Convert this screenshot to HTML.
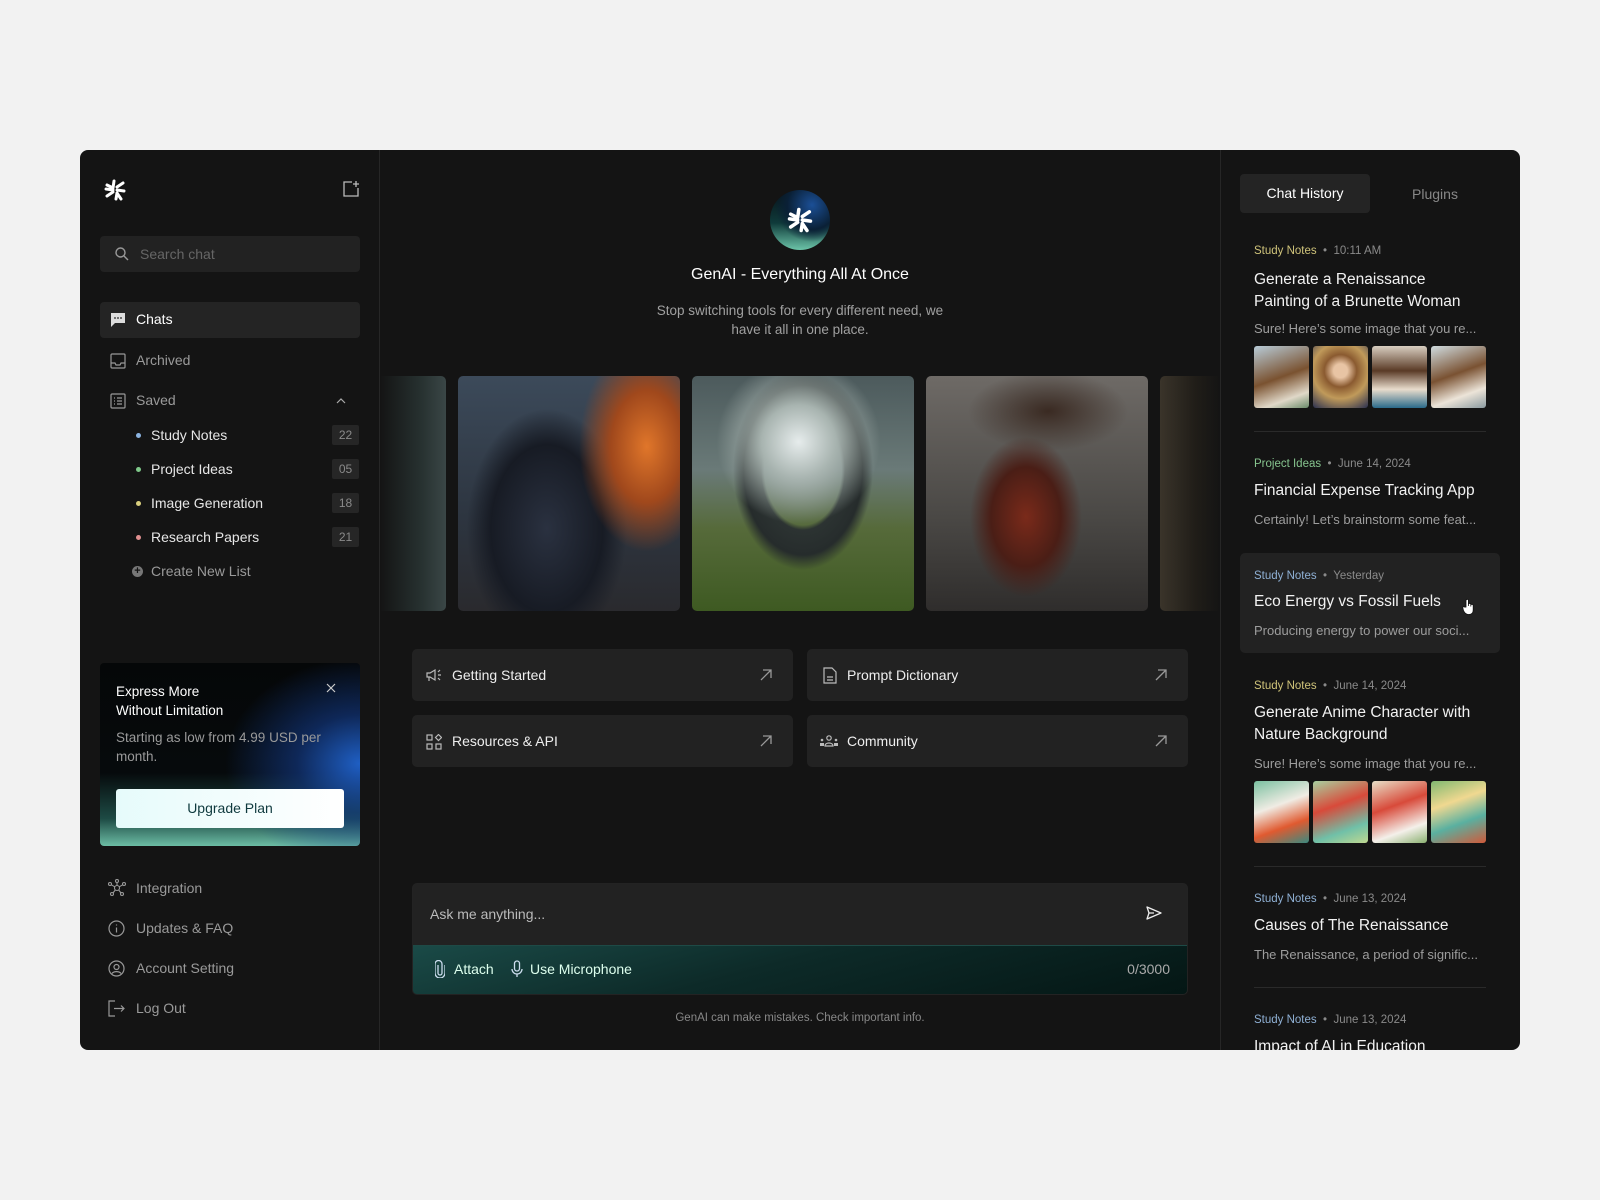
<!DOCTYPE html>
<html><head><meta charset="utf-8"><style>
*{box-sizing:border-box;margin:0;padding:0}
body{width:1600px;height:1200px;background:#f2f2f2;font-family:"Liberation Sans",sans-serif;overflow:hidden;position:relative}
.panel{position:absolute;left:80px;top:150px;width:1440px;height:900px;background:#141414;border-radius:8px;overflow:hidden}
.abs{position:absolute}
.side{left:0;top:0;width:300px;height:900px;border-right:1px solid #262626}
.right{left:1140px;top:0;width:300px;height:900px;border-left:1px solid #262626}
.t{position:absolute;white-space:nowrap}
svg{position:absolute}
.nav{color:#9a9a9a;font-size:14px}
.sub{color:#e6e6e6;font-size:14px}
.dot{position:absolute;width:5px;height:5px;border-radius:50%}
.badge{position:absolute;left:252px;width:27px;height:20px;background:#262626;color:#8a8a8a;font-size:12px;text-align:center;line-height:20px;border-radius:2px}
.card{position:absolute;background:#222;border-radius:5px;height:52px;width:381px}
.card .t{color:#eee;font-size:14px;top:18px;left:40px}
.img{position:absolute;top:226px;height:235px;border-radius:5px;overflow:hidden}
.meta{font-size:11.5px;color:#8a8a8a}
.ttl{color:#f2f2f2;font-size:15.5px;line-height:22px;white-space:normal;width:240px}
.pv{color:#9d9d9d;font-size:13px}
.th{position:absolute;width:55px;height:62px;border-radius:3px}
.hr{position:absolute;left:1174px;width:232px;height:1px;background:#2a2a2a}
</style></head><body>
<div class="panel">
 <div class="abs side">
  <svg style="left:23px;top:28px" width="24" height="24" viewBox="0 0 24 24" fill="none" stroke="#fff" stroke-width="3" stroke-linecap="round" stroke-linejoin="round">
   <path d="M4 7l6 3M11 3l-1 7M20 5l-6 4M21 13l-7-1M18 21l-4-6M13 21l1-6M4 18l6-4M3 11l7 1"/></svg>
  <svg style="left:262px;top:30px" width="18" height="18" viewBox="0 0 18 18" fill="none" stroke="#bbb" stroke-width="1.3"><path d="M10 2H2v14h14V8"/><path d="M14 1v6M11 4h6"/></svg>
  <div class="abs" style="left:20px;top:86px;width:260px;height:36px;background:#222;border-radius:4px"></div>
  <svg style="left:34px;top:96px" width="16" height="16" viewBox="0 0 16 16" fill="none" stroke="#999" stroke-width="1.4"><circle cx="6.5" cy="6.5" r="4.5"/><path d="M10 10l4 4"/></svg>
  <div class="t" style="left:60px;top:96px;color:#666;font-size:14px">Search chat</div>
  <div class="abs" style="left:20px;top:152px;width:260px;height:36px;background:#242424;border-radius:4px"></div>
  <svg style="left:30px;top:162px" width="16" height="16" viewBox="0 0 16 16"><path d="M1 1h14v10H5l-4 4z" fill="#ddd"/><circle cx="5" cy="6" r=".9" fill="#242424"/><circle cx="8" cy="6" r=".9" fill="#242424"/><circle cx="11" cy="6" r=".9" fill="#242424"/></svg>
  <div class="t" style="left:56px;top:161px;color:#fff;font-size:14px">Chats</div>
  <svg style="left:30px;top:203px" width="16" height="16" viewBox="0 0 16 16" fill="none" stroke="#999" stroke-width="1.2"><rect x="1" y="1" width="14" height="14" rx="1"/><path d="M1 10h4l1 2h4l1-2h4"/></svg>
  <div class="t nav" style="left:56px;top:202px">Archived</div>
  <svg style="left:30px;top:243px" width="16" height="16" viewBox="0 0 16 16" fill="none" stroke="#999" stroke-width="1.2"><rect x="1" y="1" width="14" height="14" rx="1"/><path d="M4 5h1M7 5h5M4 8h1M7 8h5M4 11h1M7 11h5"/></svg>
  <div class="t nav" style="left:56px;top:242px">Saved</div>
  <svg style="left:256px;top:247px" width="10" height="8" viewBox="0 0 10 8" fill="none" stroke="#aaa" stroke-width="1.2"><path d="M1 6l4-4 4 4"/></svg>
  <div class="dot" style="left:56px;top:283px;background:#8bb3e0"></div><div class="t sub" style="left:71px;top:277px">Study Notes</div><div class="badge" style="top:275px">22</div>
  <div class="dot" style="left:56px;top:317px;background:#7fc98a"></div><div class="t sub" style="left:71px;top:311px">Project Ideas</div><div class="badge" style="top:309px">05</div>
  <div class="dot" style="left:56px;top:351px;background:#d9cf7e"></div><div class="t sub" style="left:71px;top:345px">Image Generation</div><div class="badge" style="top:343px">18</div>
  <div class="dot" style="left:56px;top:385px;background:#e09090"></div><div class="t sub" style="left:71px;top:379px">Research Papers</div><div class="badge" style="top:377px">21</div>
  <div class="abs" style="left:52px;top:416px;width:11px;height:11px;border-radius:50%;background:#777;color:#141414;font-size:11px;line-height:11px;text-align:center;font-weight:bold">+</div>
  <div class="t nav" style="left:71px;top:413px">Create New List</div>
  <div class="abs" style="left:20px;top:513px;width:260px;height:183px;border-radius:4px;background:radial-gradient(ellipse 180px 140px at 100% 55%,#1f5fc4 0%,rgba(20,60,140,.6) 35%,rgba(0,0,0,0) 75%),linear-gradient(180deg,#050708 0%,#060a0c 60%,#1d4a44 85%,#6cbca4 100%)"></div>
  <div class="t" style="left:36px;top:532px;color:#fff;font-size:13.5px;line-height:19px">Express More<br>Without Limitation</div>
  <div class="t" style="left:36px;top:578px;color:#9a9a9a;font-size:13.5px;line-height:19px">Starting as low from 4.99 USD per<br>month.</div>
  <svg style="left:246px;top:533px" width="10" height="10" viewBox="0 0 10 10" stroke="#ccc" stroke-width="1.2"><path d="M1 1l8 8M9 1l-8 8"/></svg>
  <div class="abs" style="left:36px;top:639px;width:228px;height:39px;background:linear-gradient(90deg,#e6fbfb,#fff);border-radius:3px;color:#0f3a3e;font-size:14px;text-align:center;line-height:39px">Upgrade Plan</div>
  <svg style="left:27px;top:729px" width="20" height="18" viewBox="0 0 20 18" fill="none" stroke="#999" stroke-width="1.1"><circle cx="10" cy="9" r="2.5"/><circle cx="10" cy="2" r="1.5"/><circle cx="3" cy="5" r="1.5"/><circle cx="17" cy="5" r="1.5"/><circle cx="5" cy="15" r="1.5"/><circle cx="15" cy="15" r="1.5"/><path d="M10 3.5v3M4.3 5.8l3.5 2M15.7 5.8l-3.5 2M6 14l2.3-3M14 14l-2.3-3"/></svg>
  <div class="t nav" style="left:56px;top:730px">Integration</div>
  <svg style="left:28px;top:770px" width="17" height="17" viewBox="0 0 17 17" fill="none" stroke="#999" stroke-width="1.2"><circle cx="8.5" cy="8.5" r="7.5"/><path d="M8.5 7.5v5M8.5 4.5v1"/></svg>
  <div class="t nav" style="left:56px;top:770px">Updates &amp; FAQ</div>
  <svg style="left:28px;top:810px" width="17" height="17" viewBox="0 0 17 17" fill="none" stroke="#999" stroke-width="1.2"><circle cx="8.5" cy="8.5" r="7.5"/><circle cx="8.5" cy="7" r="2.5"/><path d="M4 13.5c2-2.5 7-2.5 9 0"/></svg>
  <div class="t nav" style="left:56px;top:810px">Account Setting</div>
  <svg style="left:28px;top:850px" width="17" height="17" viewBox="0 0 17 17" fill="none" stroke="#999" stroke-width="1.2"><path d="M7 1H1v15h6M6 8.5h10M13 5.5l3 3-3 3"/></svg>
  <div class="t nav" style="left:56px;top:850px">Log Out</div>
 </div>

 <div class="abs" style="left:690px;top:40px;width:60px;height:60px;border-radius:50%;background:radial-gradient(circle at 70% 25%,#1b4f96 0%,#0a2036 40%,rgba(0,0,0,0) 60%),linear-gradient(180deg,#071018 0%,#0f3a3a 55%,#6cc4a8 100%)"></div>
  <svg style="left:706px;top:56px" width="28" height="28" viewBox="0 0 24 24" fill="none" stroke="#fff" stroke-width="3" stroke-linecap="round" stroke-linejoin="round">
   <path d="M4 7l6 3M11 3l-1 7M20 5l-6 4M21 13l-7-1M18 21l-4-6M13 21l1-6M4 18l6-4M3 11l7 1"/></svg>
 <div class="t" style="left:300px;width:840px;text-align:center;top:116px;color:#fff;font-size:16px">GenAI - Everything All At Once</div>
 <div class="t" style="left:300px;width:840px;text-align:center;top:151px;color:#a0a0a0;font-size:13.5px;line-height:19px">Stop switching tools for every different need, we<br>have it all in one place.</div>
 <div class="img" style="left:300px;width:66px;background:linear-gradient(90deg,#141414,#26302f 60%,#3a4646);border-radius:0 5px 5px 0"></div>
 <div class="img" style="left:378px;width:222px;background:radial-gradient(ellipse 90px 140px at 85% 30%,#e0762a 0%,#a0481c 40%,rgba(0,0,0,0) 75%),radial-gradient(ellipse 80px 120px at 40% 65%,#2a3140 0%,#171b24 70%,rgba(0,0,0,0) 100%),linear-gradient(180deg,#3c4a5a,#2d3540 60%,#2a2a2e)"></div>
 <div class="img" style="left:612px;width:222px;background:radial-gradient(circle at 48% 28%,#e6ecec 0%,#a8b4b0 18%,rgba(0,0,0,0) 40%),radial-gradient(ellipse 70px 100px at 50% 40%,rgba(0,0,0,0) 55%,#2c3332 60%,#262c2c 85%,rgba(0,0,0,0) 100%),linear-gradient(180deg,#4c5a5c 0%,#6a7a78 40%,#566a3a 65%,#3e5a22 100%)"></div>
 <div class="img" style="left:846px;width:222px;background:radial-gradient(ellipse 70px 100px at 45% 60%,#7a2a1a 0%,#4a1e16 50%,rgba(0,0,0,0) 80%),radial-gradient(ellipse 80px 40px at 55% 15%,#3a2a22 0%,rgba(0,0,0,0) 100%),linear-gradient(180deg,#6e6a66,#4a4845 60%,#2f2d2c)"></div>
 <div class="img" style="left:1080px;width:60px;background:linear-gradient(90deg,#3a342a,#201d18 60%,#141414);border-radius:5px 0 0 5px"></div>

 <div class="card" style="left:332px;top:499px"><svg style="left:14px;top:19px" width="16" height="14" viewBox="0 0 16 14" fill="none" stroke="#bbb" stroke-width="1.2"><path d="M1 5h3l5-3v10L4 9H1zM3 9v4M12 4l2-2M12 7h3M12 10l2 2"/></svg><div class="t">Getting Started</div><svg style="left:348px;top:20px" width="12" height="12" viewBox="0 0 12 12" stroke="#999" stroke-width="1.3" fill="none"><path d="M1 11L11 1M3 1h8v8"/></svg></div>
 <div class="card" style="left:727px;top:499px"><svg style="left:16px;top:18px" width="14" height="17" viewBox="0 0 14 17" fill="none" stroke="#bbb" stroke-width="1.2"><path d="M1 1h8l4 4v11H1z"/><path d="M4 10h6M4 13h6"/></svg><div class="t">Prompt Dictionary</div><svg style="left:348px;top:20px" width="12" height="12" viewBox="0 0 12 12" stroke="#999" stroke-width="1.3" fill="none"><path d="M1 11L11 1M3 1h8v8"/></svg></div>
 <div class="card" style="left:332px;top:565px"><svg style="left:14px;top:19px" width="16" height="16" viewBox="0 0 16 16" fill="none" stroke="#bbb" stroke-width="1.2"><rect x="1" y="1" width="5" height="5"/><rect x="1" y="10" width="5" height="5"/><rect x="10" y="10" width="5" height="5"/><path d="M12.5 0.5l3 3-3 3-3-3z"/></svg><div class="t">Resources &amp; API</div><svg style="left:348px;top:20px" width="12" height="12" viewBox="0 0 12 12" stroke="#999" stroke-width="1.3" fill="none"><path d="M1 11L11 1M3 1h8v8"/></svg></div>
 <div class="card" style="left:727px;top:565px"><svg style="left:12px;top:20px" width="20" height="12" viewBox="0 0 20 12" fill="#bbb"><circle cx="10" cy="3" r="2.2" fill="none" stroke="#bbb" stroke-width="1.2"/><path d="M6 11c0-4 8-4 8 0z" fill="none" stroke="#bbb" stroke-width="1.2"/><circle cx="3" cy="5" r="1.3"/><circle cx="17" cy="5" r="1.3"/><rect x="1" y="8" width="4" height="3"/><rect x="15" y="8" width="4" height="3"/></svg><div class="t">Community</div><svg style="left:348px;top:20px" width="12" height="12" viewBox="0 0 12 12" stroke="#999" stroke-width="1.3" fill="none"><path d="M1 11L11 1M3 1h8v8"/></svg></div>

 <div class="abs" style="left:332px;top:733px;width:776px;height:112px;border-radius:5px;overflow:hidden;background:#222;border:1px solid #232323">
  <div class="t" style="left:17px;top:22px;color:#bbb;font-size:14px">Ask me anything...</div>
  <svg style="left:733px;top:22px" width="16" height="14" viewBox="0 0 16 14" fill="none" stroke="#eee" stroke-width="1.3" stroke-linejoin="round"><path d="M1 1l14 6-14 6 2-6z M3 7h5"/></svg>
  <div class="abs" style="left:0;top:61px;width:776px;height:51px;border-top:1px solid #1e4a46;background:linear-gradient(165deg,#1a4a47 0%,#0d2a28 45%,#041614 100%)"></div>
  <svg style="left:22px;top:76px" width="10" height="18" viewBox="0 0 10 18" fill="none" stroke="#cde" stroke-width="1.3"><path d="M3 5v8a2 2 0 004 0V4a3.5 3.5 0 00-7 0v9a5 5 0 0010 0V5"/></svg>
  <div class="t" style="left:41px;top:77px;color:#dfe;font-size:14px">Attach</div>
  <svg style="left:98px;top:76px" width="12" height="18" viewBox="0 0 12 18" fill="none" stroke="#cde" stroke-width="1.3"><rect x="3.5" y="1" width="5" height="10" rx="2.5"/><path d="M1 9a5 5 0 0010 0M6 14v3"/></svg>
  <div class="t" style="left:117px;top:77px;color:#dfe;font-size:14px">Use Microphone</div>
  <div class="t" style="right:17px;top:77px;color:#aaa;font-size:14px">0/3000</div>
 </div>
 <div class="t" style="left:300px;width:840px;text-align:center;top:862px;color:#888;font-size:11.5px">GenAI can make mistakes. Check important info.</div>

 <div class="abs right"></div>
 <div class="abs" style="left:1160px;top:24px;width:130px;height:39px;background:#242424;border-radius:4px;color:#fff;font-size:14px;text-align:center;line-height:39px">Chat History</div>
 <div class="t" style="left:1295px;width:120px;text-align:center;top:36px;color:#888;font-size:14px">Plugins</div>

 <div class="t meta" style="left:1174px;top:95px"><span style="color:#cfc37a">Study Notes</span> &nbsp;•&nbsp; 10:11 AM</div>
 <div class="t ttl" style="left:1174px;top:119px;width:222px">Generate a Renaissance Painting of a Brunette Woman</div>
 <div class="t pv" style="left:1174px;top:171px">Sure! Here’s some image that you re...</div>
 <div class="th" style="left:1174px;top:196px;background:linear-gradient(160deg,#b8ccd8,#7a5230 50%,#e0d8c8 80%,#6a8a6a)"></div>
 <div class="th" style="left:1233px;top:196px;background:radial-gradient(circle at 50% 40%,#e8c4a4 15%,#8a5a30 35%,#c09a5a 60%,#2a3050)"></div>
 <div class="th" style="left:1292px;top:196px;background:linear-gradient(180deg,#d8cec0,#5a3a26 40%,#e8dccc 70%,#2a6a8a)"></div>
 <div class="th" style="left:1351px;top:196px;background:linear-gradient(160deg,#d0dce0,#7a5232 45%,#ece4d8 75%,#8a9aa0)"></div>
 <div class="hr" style="top:281px"></div>

 <div class="t meta" style="left:1174px;top:308px"><span style="color:#86c48e">Project Ideas</span> &nbsp;•&nbsp; June 14, 2024</div>
 <div class="t ttl" style="left:1174px;top:330px;width:260px">Financial Expense Tracking App</div>
 <div class="t pv" style="left:1174px;top:362px">Certainly! Let’s brainstorm some feat...</div>

 <div class="abs" style="left:1160px;top:403px;width:260px;height:100px;background:#222;border-radius:5px"></div>
 <div class="t meta" style="left:1174px;top:420px"><span style="color:#8fb0d4">Study Notes</span> &nbsp;•&nbsp; Yesterday</div>
 <div class="t ttl" style="left:1174px;top:441px">Eco Energy vs Fossil Fuels</div>
 <div class="t pv" style="left:1174px;top:473px">Producing energy to power our soci...</div>
 <svg style="left:1382px;top:448px" width="14" height="17" viewBox="0 0 14 17"><path d="M4 9V2.5a1.2 1.2 0 012.4 0V8V6.5a1.2 1.2 0 012.4 0V8.5V7.5a1.2 1.2 0 012.4 0V12c0 3-2 4.5-4.5 4.5S2.5 15 1.5 12.5L0.8 10a1.1 1.1 0 012-0.8z" fill="#fff" stroke="#111" stroke-width="0.8"/></svg>

 <div class="t meta" style="left:1174px;top:530px"><span style="color:#cfc37a">Study Notes</span> &nbsp;•&nbsp; June 14, 2024</div>
 <div class="t ttl" style="left:1174px;top:552px;width:240px">Generate Anime Character with Nature Background</div>
 <div class="t pv" style="left:1174px;top:606px">Sure! Here’s some image that you re...</div>
 <div class="th" style="left:1174px;top:631px;background:linear-gradient(160deg,#7ac0a0,#f0ece4 40%,#e05a30 70%,#3a8a80)"></div>
 <div class="th" style="left:1233px;top:631px;background:linear-gradient(160deg,#a8d0a0,#d84a3a 40%,#70c0a8 75%,#c0d890)"></div>
 <div class="th" style="left:1292px;top:631px;background:linear-gradient(160deg,#e8e0c8,#d84a3a 40%,#f4f0ea 75%,#8ab070)"></div>
 <div class="th" style="left:1351px;top:631px;background:linear-gradient(160deg,#80b870,#f0d890 35%,#5ab0a0 65%,#d05a3a)"></div>
 <div class="hr" style="top:716px"></div>

 <div class="t meta" style="left:1174px;top:743px"><span style="color:#8fb0d4">Study Notes</span> &nbsp;•&nbsp; June 13, 2024</div>
 <div class="t ttl" style="left:1174px;top:765px;width:260px">Causes of The Renaissance</div>
 <div class="t pv" style="left:1174px;top:797px">The Renaissance, a period of signific...</div>
 <div class="hr" style="top:837px"></div>
 <div class="t meta" style="left:1174px;top:864px"><span style="color:#8fb0d4">Study Notes</span> &nbsp;•&nbsp; June 13, 2024</div>
 <div class="t ttl" style="left:1174px;top:886px;width:260px">Impact of AI in Education</div>
</div>
</body></html>
